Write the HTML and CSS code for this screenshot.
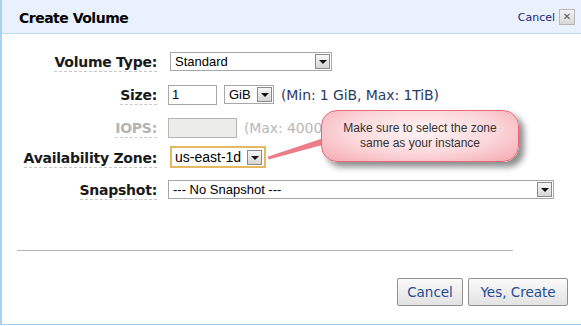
FILE: index.html
```html
<!DOCTYPE html>
<html>
<head>
<meta charset="utf-8">
<link rel="stylesheet" href="styles.css">
</head>
<body>
<div class="dialog">
  <div class="header">
    <h1 class="title">Create Volume</h1>
    <div class="close"><a class="close-link">Cancel</a><span class="close-x">✕</span></div>
  </div>
  <div class="form">
    <div class="row r1">
      <div class="label"><span>Volume Type:</span></div>
      <div class="ctl">
        <div class="select w-type"><span class="val">Standard</span><span class="arrow"></span></div>
      </div>
    </div>
    <div class="row r2">
      <div class="label"><span>Size:</span></div>
      <div class="ctl">
        <div class="input w-size">1</div>
        <div class="select w-unit"><span class="val">GiB</span><span class="arrow"></span></div>
        <span class="hint">(Min: 1 GiB, Max: 1TiB)</span>
      </div>
    </div>
    <div class="row r3 disabled">
      <div class="label"><span>IOPS:</span></div>
      <div class="ctl">
        <div class="input w-iops"></div>
        <span class="hint">(Max: 4000)</span>
      </div>
    </div>
    <div class="row r4">
      <div class="label"><span>Availability Zone:</span></div>
      <div class="ctl">
        <div class="select w-zone focus"><span class="val">us-east-1d</span><span class="arrow"></span></div>
      </div>
    </div>
    <div class="row r5">
      <div class="label"><span>Snapshot:</span></div>
      <div class="ctl">
        <div class="select w-snap"><span class="val">--- No Snapshot ---</span><span class="arrow"></span></div>
      </div>
    </div>
  </div>
  <div class="divider"></div>
  <div class="buttons">
    <button class="btn btn-cancel">Cancel</button>
    <button class="btn btn-create">Yes, Create</button>
  </div>

  <svg class="pointer" width="70" height="30" viewBox="0 0 70 30">
    <polygon points="0,26 60,6 60,12 1,28" fill="#ee7f88" stroke="#e06070" stroke-width="0.6"/>
  </svg>
  <div class="callout">Make sure to select the zone<br>same as your instance</div>
</div>
</body>
</html>
```
FILE: styles.css
```css
html, body {
  margin: 0;
  padding: 0;
  background: #ffffff;
}
body {
  width: 581px;
  height: 326px;
  overflow: hidden;
  font-family: "DejaVu Sans", Verdana, sans-serif;
}
.dialog {
  position: relative;
  width: 581px;
  height: 325px;
  border-left: 2px solid #a9d1f1;
  border-bottom: 1px solid #a9c9ea;
  box-sizing: border-box;
  background: #fff;
}
.header {
  height: 34px;
  background: #e9f2fc;
  border-bottom: 1px solid #b9daf3;
  display: flex;
  align-items: center;
  justify-content: space-between;
  padding: 0 6px 0 17px;
  box-sizing: border-box;
}
.title {
  margin: 0;
  font-family: "DejaVu Sans", Tahoma, sans-serif;
  font-weight: bold;
  font-size: 14px;
  letter-spacing: -0.5px;
  color: #000;
  padding-top: 2px;
}
.close {
  display: flex;
  align-items: center;
  gap: 4px;
  padding-top: 1px;
}
.close-link {
  font-family: "DejaVu Sans", Verdana, sans-serif;
  font-size: 11px;
  color: #1c1c78;
}
.close-x {
  width: 14px;
  height: 14px;
  border: 1px solid #b8b8b8;
  background: linear-gradient(#f4f4f4, #d8d8d8);
  font-size: 10px;
  line-height: 14px;
  text-align: center;
  color: #555;
  font-weight: bold;
}
.form {
  padding-top: 11px;
  display: flex;
  flex-direction: column;
}
.row {
  display: flex;
  align-items: center;
  height: 33px;
}
.r4 { height: 26px; margin-bottom: 3px; }
.label {
  width: 155px;
  text-align: right;
  flex: none;
}
.label span {
  font-family: "DejaVu Sans", Tahoma, sans-serif;
  font-weight: bold;
  font-size: 14px;
  color: #1a1a1a;
  border-bottom: 1px dashed #c8c8c8;
  padding-bottom: 1px;
  letter-spacing: -0.25px;
}
.disabled .label span { color: #b4b4b4; }
.ctl {
  display: flex;
  align-items: center;
  margin-left: 11px;
  gap: 7px;
}
.select {
  position: relative;
  height: 19px;
  border: 1px solid #a7a7a7;
  box-sizing: border-box;
  background: #fff;
  font-family: "Liberation Sans", Arial, sans-serif;
  font-size: 13px;
  color: #000;
  display: flex;
  align-items: center;
  padding-left: 4px;
}
.select .arrow {
  position: absolute;
  right: 1px;
  top: 1px;
  width: 15px;
  height: 15px;
  box-sizing: border-box;
  border: 1px solid #8a8a8a;
  background: linear-gradient(#f6f6f6, #d6d6d6);
}
.select .arrow::after {
  content: "";
  position: absolute;
  left: 3px;
  top: 5px;
  border-left: 4px solid transparent;
  border-right: 4px solid transparent;
  border-top: 4px solid #111;
}
.w-type { width: 162px; margin-left: 2px; }
.w-unit { width: 50px; }
.w-zone {
  width: 96px;
  height: 22px;
  margin-left: 2px;
  border: 2px solid #e6b862;
  padding-left: 3px;
  font-size: 14px;
}
.w-zone .arrow { top: 2px; right: 2px; }
.w-snap { width: 386px; }
.input {
  height: 20px;
  border: 1px solid #a7a7a7;
  box-sizing: border-box;
  font-family: "Liberation Sans", Arial, sans-serif;
  font-size: 13px;
  padding-left: 3px;
  display: flex;
  align-items: center;
}
.w-size { width: 49px; }
.w-iops {
  width: 69px;
  background: #ececea;
  border-color: #b4b4b4;
}
.hint {
  font-family: "DejaVu Sans", Verdana, sans-serif;
  font-size: 14px;
  color: #2b3a66;
  letter-spacing: -0.1px;
}
.disabled .hint { color: #b8b8b8; }
.divider {
  margin: 44px 0 0 15px;
  width: 496px;
  height: 1px;
  background: #b5b5b5;
}
.buttons {
  display: flex;
  justify-content: flex-end;
  gap: 5px;
  margin-top: 27px;
  padding-right: 13px;
}
.btn {
  height: 28px;
  border: 1px solid #8f8f8f;
  border-radius: 2px;
  background: linear-gradient(#fafafa, #e2e2e2);
  font-family: "DejaVu Sans", Verdana, sans-serif;
  font-size: 13.5px;
  color: #1f4c96;
  padding: 0;
  margin: 0;
}
.btn-cancel { width: 66px; }
.btn-create { width: 100px; }
.pointer {
  position: absolute;
  left: 266px;
  top: 131px;
}
.callout {
  position: absolute;
  left: 319px;
  top: 110px;
  width: 198px;
  height: 52px;
  box-sizing: border-box;
  border: 1px solid #e86a78;
  border-radius: 16px;
  background: radial-gradient(ellipse at 50% 40%, #fff4f5 0%, #fbd6d9 55%, #f4a8b0 100%);
  box-shadow: 5px 5px 6px rgba(0,0,0,0.45);
  font-family: "Liberation Sans", Arial, sans-serif;
  font-size: 12px;
  line-height: 15px;
  color: #333;
  text-align: center;
  padding-top: 10px;
}
```
